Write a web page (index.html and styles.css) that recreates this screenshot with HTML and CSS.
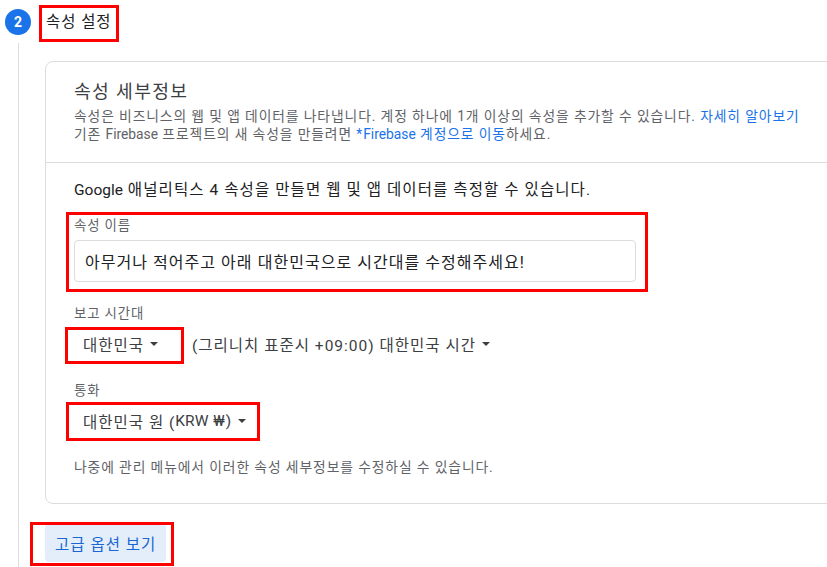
FILE: index.html
```html
<!DOCTYPE html>
<html lang="ko">
<head>
    <meta charset="UTF-8">
    <meta name="viewport" content="width=device-width, initial-scale=1.0">
    <title>속성 설정</title>
    <link rel="stylesheet" href="styles.css">
</head>
<body>
    <div class="step">
        <div class="step-head">
            <span class="step-num">2</span>
            <span class="step-title marked mark-title">속성 설정</span>
        </div>

        <div class="step-body">
            <div class="card">
                <div class="card-head">
                    <h2>속성 세부정보</h2>
                    <p class="desc">속성은 비즈니스의 웹 및 앱 데이터를 나타냅니다. 계정 하나에 1개 이상의 속성을 추가할 수 있습니다. <a href="#">자세히 알아보기</a></p>
                    <p class="desc">기존 <span class="latin">Firebase</span> 프로젝트의 새 속성을 만들려면 <a href="#">*<span class="latin">Firebase</span> 계정으로 이동</a>하세요.</p>
                </div>

                <div class="card-body">
                    <p class="intro"><span class="latin">Google</span> 애널리틱스 4 속성을 만들면 웹 및 앱 데이터를 측정할 수 있습니다.</p>

                    <div class="field field-name marked mark-name">
                        <label class="field-label">속성 이름</label>
                        <div class="input">아무거나 적어주고 아래 대한민국으로 시간대를 수정해주세요!</div>
                    </div>

                    <div class="field field-tz">
                        <label class="field-label">보고 시간대</label>
                        <div class="select-row">
                            <div class="select marked mark-country">대한민국 <span class="caret"></span></div>
                            <div class="select select-tz">(그리니치 표준시 +09:00) 대한민국 시간 <span class="caret"></span></div>
                        </div>
                    </div>

                    <div class="field field-currency">
                        <label class="field-label">통화</label>
                        <div class="select-row">
                            <div class="select marked mark-currency">대한민국 원 (<span class="latin">KRW</span> ₩) <span class="caret"></span></div>
                        </div>
                    </div>

                    <p class="note">나중에 관리 메뉴에서 이러한 속성 세부정보를 수정하실 수 있습니다.</p>
                </div>
            </div>

            <button class="btn-advanced marked mark-btn">고급 옵션 보기</button>
        </div>
    </div>
</body>
</html>
```

FILE: styles.css
```css
body {
    margin: 0;
    background-color: white;
    font-family: Roboto, "Noto Sans CJK KR", sans-serif;
    color: #202124;
    overflow: hidden;
}
.latin {
    letter-spacing: 0;
}
.step-head {
    display: flex;
    align-items: center;
    height: 43px;
    padding-left: 5px;
}
.step-num {
    width: 26px;
    height: 26px;
    border-radius: 50%;
    background-color: #1a73e8;
    color: white;
    font-size: 14px;
    font-weight: 700;
    display: flex;
    align-items: center;
    justify-content: center;
    margin-right: 15px;
}
.step-title {
    font-size: 15.4px;
    line-height: 20px;
    letter-spacing: 0.065em;
    color: #202124;
}
.step-body {
    margin-left: 18px;
    border-left: 1px solid #dadce0;
    padding: 18px 0 20px 26px;
}
.card {
    width: 820px;
    border: 1px solid #dadce0;
    border-radius: 8px;
}
.card-head {
    padding: 18px 28px 19px;
    border-bottom: 1px solid #dadce0;
}
.card-head h2 {
    margin: 0 0 3px;
    font-size: 18.2px;
    line-height: 24px;
    font-weight: 400;
    letter-spacing: 0.075em;
    color: #3c4043;
}
.desc {
    margin: 0;
    font-size: 13.8px;
    line-height: 18px;
    letter-spacing: 0.065em;
    color: #5f6368;
}
.desc a {
    color: #1a73e8;
    text-decoration: none;
}
.card-body {
    padding: 17px 28px 27px;
}
.intro {
    margin: 0;
    font-size: 15.5px;
    line-height: 20px;
    letter-spacing: 0.07em;
    color: #202124;
}
.field-label {
    display: block;
    font-size: 13.4px;
    line-height: 16px;
    letter-spacing: 0.065em;
    color: #5f6368;
}
.field-name {
    width: 562px;
    margin-top: 18px;
}
.input {
    margin-top: 6px;
    height: 40px;
    border: 1px solid #dadce0;
    border-radius: 4px;
    padding: 0 10px;
    display: flex;
    align-items: center;
    font-size: 16px;
    letter-spacing: 0.065em;
    color: #202124;
}
.field-tz {
    margin-top: 24px;
}
.field-currency {
    margin-top: 21px;
}
.select-row {
    display: flex;
    margin-top: 4px;
}
.select {
    height: 36px;
    padding: 0 10px 0 9px;
    display: flex;
    align-items: center;
    font-size: 15.5px;
    letter-spacing: 0.065em;
    color: #3c4043;
    white-space: pre;
}
.select-tz {
    margin-left: 24px;
    padding-left: 0;
}
.caret {
    display: inline-block;
    margin-left: 1px;
    border-left: 4px solid transparent;
    border-right: 4px solid transparent;
    border-top: 4px solid #3c4043;
}
.note {
    margin: 19px 0 0;
    font-size: 13.8px;
    line-height: 18px;
    letter-spacing: 0.065em;
    color: #5f6368;
}
.btn-advanced {
    margin-top: 20px;
    height: 38px;
    padding: 0 10px;
    border: none;
    border-radius: 4px;
    background-color: #e4eefb;
    color: #1967d2;
    font-family: Roboto, "Noto Sans CJK KR", sans-serif;
    font-size: 15.5px;
    letter-spacing: 0.065em;
}

/* red annotation boxes */
.marked {
    position: relative;
}
.marked::after {
    content: "";
    position: absolute;
    border: 3px solid #f00;
}
.mark-title::after {
    top: -7px;
    left: -7px;
    right: -8px;
    bottom: -10px;
}
.mark-name::after {
    top: -6px;
    left: -8px;
    right: -12px;
    bottom: -10px;
}
.mark-country::after {
    top: 1px;
    left: -9px;
    right: -16px;
    bottom: -2px;
}
.mark-currency::after {
    top: -1px;
    left: -8px;
    right: -4px;
    bottom: -2px;
}
.mark-btn::after {
    top: -2px;
    left: -15px;
    right: -8px;
    bottom: -4px;
}
```
